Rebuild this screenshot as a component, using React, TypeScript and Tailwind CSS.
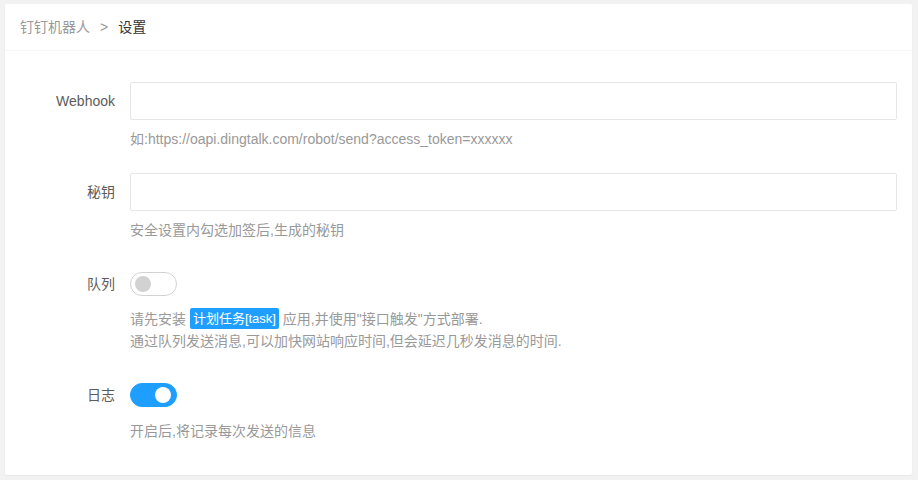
import React from 'react';

const font = { fontFamily: '"Liberation Sans", "Noto Sans CJK SC", sans-serif' };

interface SwitchProps {
  on: boolean;
}

const Switch: React.FC<SwitchProps> = ({ on }) => {
  return (
    <div
      className={
        on
          ? 'relative w-[47px] h-[24px] rounded-full bg-[#1e9fff] border border-[#1e9fff]'
          : 'relative w-[47px] h-[24px] rounded-full bg-white border border-[#d2d2d2]'
      }
    >
      <div
        className={
          on
            ? 'absolute top-[3px] right-[5px] w-[16px] h-[16px] rounded-full bg-white'
            : 'absolute top-[3px] left-[4px] w-[16px] h-[16px] rounded-full bg-[#d2d2d2]'
        }
      />
    </div>
  );
};

const Label: React.FC<{ text: string; h: string }> = ({ text, h }) => (
  <div className={`w-[110px] shrink-0 pr-[15px] text-right text-[14px] text-[#5c5c5c] ${h}`}>{text}</div>
);

export default function App() {
  return (
    <div className="min-h-[480px] bg-[#f2f2f2] pt-[4px] pl-[5px] pr-[6px] pb-[5px]" style={font}>
      <div className="bg-white rounded-[2px] shadow-[0_1px_2px_rgba(0,0,0,0.05)]">
        <div className="h-[47px] flex items-center px-[15px] border-b border-[#f6f6f6] text-[14px]">
          <span className="text-[#999]">钉钉机器人</span>
          <span className="text-[#999] mx-[10px]">&gt;</span>
          <span className="text-[#333]">设置</span>
        </div>
        <div className="px-[15px] pt-[31px] pb-[34px]">
          <div className="flex">
            <Label text="Webhook" h="leading-[38px]" />
            <div className="flex-1">
              <input className="block w-full h-[38px] border border-[#e6e6e6] rounded-[2px] px-[10px] outline-none" />
              <div className="mt-[9px] leading-[20px] text-[14px] text-[#999]">
                如:https://oapi.dingtalk.com/robot/send?access_token=xxxxxx
              </div>
            </div>
          </div>
          <div className="flex mt-[24px]">
            <Label text="秘钥" h="leading-[38px]" />
            <div className="flex-1">
              <input className="block w-full h-[38px] border border-[#e6e6e6] rounded-[2px] px-[10px] outline-none" />
              <div className="mt-[9px] leading-[20px] text-[14px] text-[#999]">安全设置内勾选加签后,生成的秘钥</div>
            </div>
          </div>
          <div className="flex mt-[32px]">
            <Label text="队列" h="leading-[24px]" />
            <div className="flex-1">
              <Switch on={false} />
              <div className="mt-[12px] leading-[22px] text-[14px] text-[#999]">
                <div>
                  请先安装{' '}
                  <span className="inline-block h-[21px] leading-[21px] px-[3px] bg-[#1e9fff] text-white rounded-[2px] text-[13px] align-top">
                    计划任务[task]
                  </span>{' '}
                  应用,并使用"接口触发"方式部署.
                </div>
                <div>通过队列发送消息,可以加快网站响应时间,但会延迟几秒发消息的时间.</div>
              </div>
            </div>
          </div>
          <div className="flex mt-[31px]">
            <Label text="日志" h="leading-[24px]" />
            <div className="flex-1">
              <Switch on={true} />
              <div className="mt-[14px] leading-[20px] text-[14px] text-[#999]">开启后,将记录每次发送的信息</div>
            </div>
          </div>
        </div>
      </div>
    </div>
  );
}
